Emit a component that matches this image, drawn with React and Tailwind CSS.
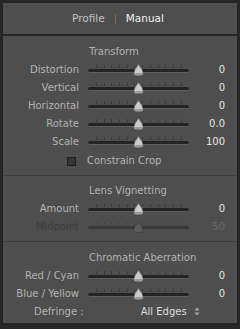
import React from 'react';

const font = { fontFamily: '"DejaVu Sans", "Liberation Sans", sans-serif' };

// Tick positions along the slider track (in px from track start)
const ticks = [8, 16, 23, 31, 39, 46, 54, 62, 70, 77, 85, 93];

const Slider = ({ dim }) => (
  <div className="relative w-[101px] h-full">
    {/* tick marks */}
    {ticks.map((t) => (
      <span
        key={t}
        className={`absolute top-[4px] h-[3px] w-px ${dim ? 'bg-[#434343]' : 'bg-[#3a3a3a]'}`}
        style={{ left: t }}
      />
    ))}
    {/* groove */}
    <div
      className={`absolute left-0 right-0 top-[8px] h-[4px] rounded-full border-b ${
        dim ? 'bg-[#383838] border-[#4a4a4a]' : 'bg-[#232323] border-[#5e5e5e]'
      }`}
    />
    {/* thumb */}
    <svg className="absolute left-[45px] top-[3px]" width="11" height="12" viewBox="0 0 11 12">
      <path
        d="M5.5 0.5 L9 5.5 L10 9 Q10 11.5 8 11.5 L3 11.5 Q1 11.5 1 9 L2 5.5 Z"
        fill={dim ? '#5a5a5a' : '#cbcbcb'}
        stroke={dim ? '#3a3a3a' : '#6a6a6a'}
        strokeWidth="0.6"
      />
      {!dim && <path d="M1.5 9 L9.5 9 L9.5 9.6 Q9.5 11 8 11 L3 11 Q1.5 11 1.5 9.6 Z" fill="#9c9c9c" />}
    </svg>
  </div>
);

const Row = ({ label, value, dim }) => (
  <div className="flex h-[18px] items-center">
    <div className={`w-[76px] text-right text-[10px] leading-none ${dim ? 'text-[#3d3d3d]' : 'text-[#b3b3b3]'}`}>
      {label}
    </div>
    <div className="ml-[9px] h-full">
      <Slider dim={dim} />
    </div>
    <div className={`w-[36px] text-right text-[10px] leading-none ${dim ? 'text-[#6a6a6a]' : 'text-[#e6e6e6]'}`}>
      {value}
    </div>
  </div>
);

const Title = ({ children, className }) => (
  <div className={`flex items-center pl-[86px] text-[10px] leading-none text-[#b2b2b2] ${className}`}>
    {children}
  </div>
);

export default function App() {
  return (
    <div className="w-[240px] h-[329px] bg-[#262626] pt-[3px] pl-[3px] pr-[3px] pb-[6px]" style={font}>
      <div className="flex h-full flex-col bg-[#4e4e4e]">
        {/* Header tabs */}
        <div className="flex h-[33px] items-center justify-center border-b-2 border-[#262626] pr-[4px] text-[10.5px] leading-none">
          <span className="text-[#c2c2c2]">Profile</span>
          <span className="mx-[10px] h-[10px] w-px bg-[#6a6a6a]" />
          <span className="text-[#f2f2f2]">Manual</span>
        </div>

        {/* Transform */}
        <div className="border-b border-[#3f3f3f] pt-[6px] pb-[4px]">
          <Title className="h-[19px]">Transform</Title>
          <Row label="Distortion" value="0" />
          <Row label="Vertical" value="0" />
          <Row label="Horizontal" value="0" />
          <Row label="Rotate" value="0.0" />
          <Row label="Scale" value="100" />
          <div className="flex h-[20px] items-center pl-[64px]">
            <span className="h-[9px] w-[9px] border border-[#1f1f1f] bg-[#353535]" />
            <span className="ml-[11px] text-[10px] leading-none text-[#b3b3b3]">Constrain Crop</span>
          </div>
        </div>

        {/* Lens Vignetting */}
        <div className="border-b border-[#3f3f3f] pt-[6px] pb-[5px]">
          <Title className="h-[18px]">Lens Vignetting</Title>
          <Row label="Amount" value="0" />
          <Row label="Midpoint" value="50" dim />
        </div>

        {/* Chromatic Aberration */}
        <div className="flex-1 pt-[6px]">
          <Title className="h-[19px]">Chromatic Aberration</Title>
          <Row label="Red / Cyan" value="0" />
          <Row label="Blue / Yellow" value="0" />
          <div className="flex h-[17px] items-center text-[10px] leading-none">
            <span className="ml-[31px] text-[#b3b3b3]">Defringe :</span>
            <span className="ml-[57px] text-[#dcdcdc]">All Edges</span>
            <svg className="ml-[7px]" width="6" height="9" viewBox="0 0 6 9">
              <path d="M3 0.5 L5.5 3.5 L0.5 3.5 Z" fill="#a8a8a8" />
              <path d="M3 8.5 L5.5 5.5 L0.5 5.5 Z" fill="#a8a8a8" />
            </svg>
          </div>
        </div>
      </div>
    </div>
  );
}
